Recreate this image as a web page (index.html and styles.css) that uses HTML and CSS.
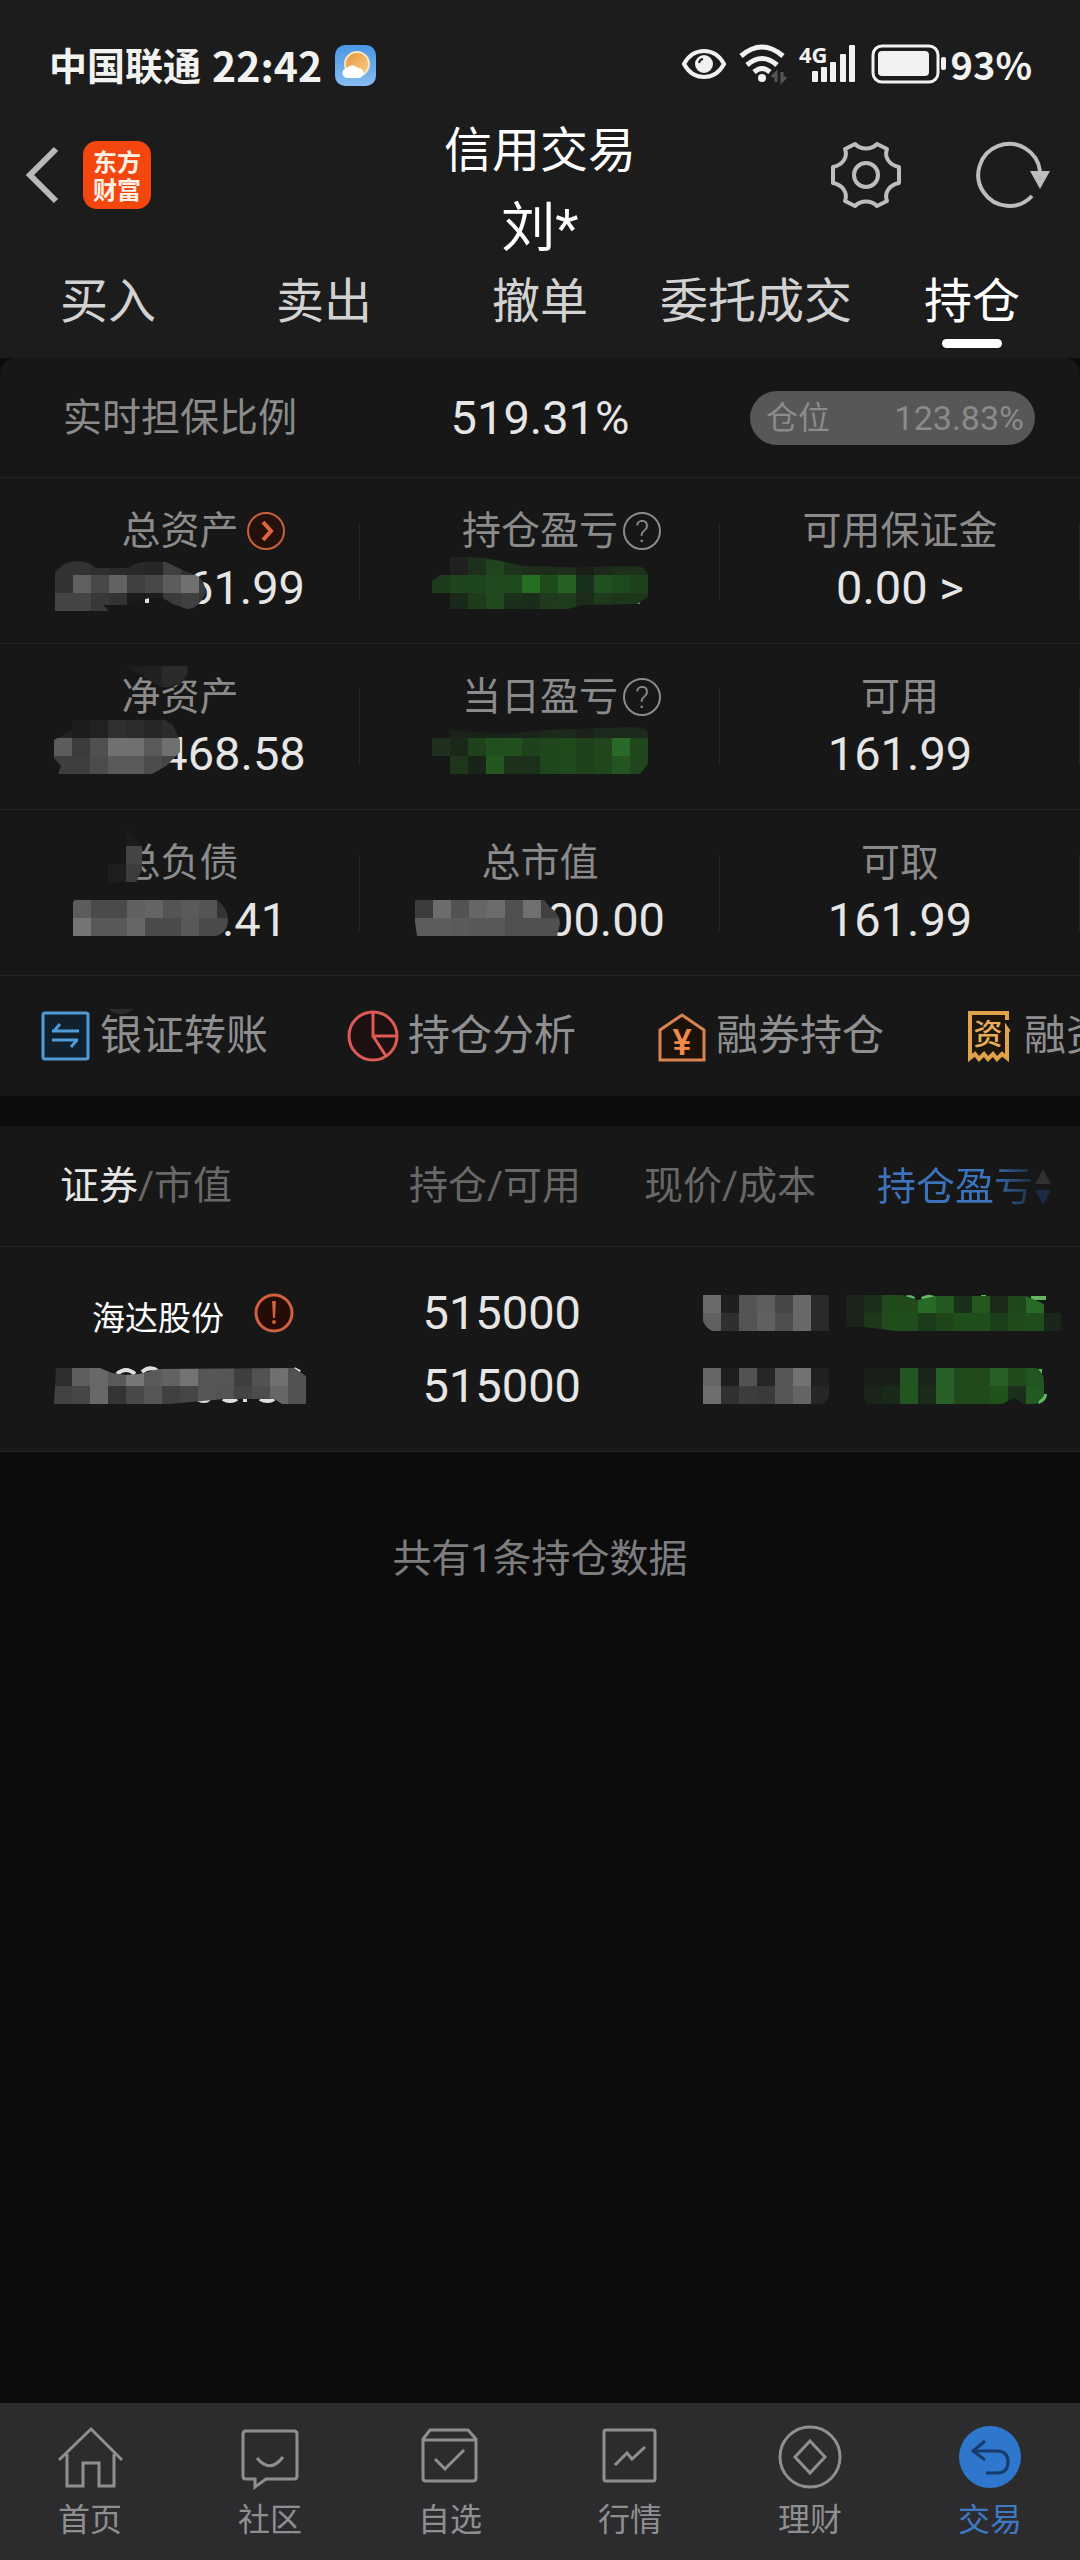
FILE: index.html
```html
<!DOCTYPE html>
<html lang="zh-CN">
<head>
	<meta charset="UTF-8">
	<meta name="viewport" content="width=device-width, initial-scale=1">
	<title>信用交易</title>
	<link rel="stylesheet" href="styles.css">
</head>
<body>
	<div class="top">
		<div class="status">
			<span class="carrier">中国联通</span>
			<span class="clock">22:42</span>
			<svg class="weather" width="41" height="41" viewBox="0 0 41 41">
				<defs>
					<linearGradient id="sky" x1="0" y1="0" x2="0" y2="1"><stop offset="0" stop-color="#4a97e6"/><stop offset="1" stop-color="#86bdf0"/></linearGradient>
					<linearGradient id="sun" x1="0" y1="0" x2="1" y2="1"><stop offset="0" stop-color="#e8943c"/><stop offset="1" stop-color="#fbd08a"/></linearGradient>
				</defs>
				<rect width="41" height="41" rx="10" fill="url(#sky)"/>
				<circle cx="22" cy="19" r="12" fill="url(#sun)" stroke="#fbe6bd" stroke-width="2"/>
				<path d="M13 33a5 5 0 0 1-1-10 7 7 0 0 1 11 0 5 5 0 0 1 1 10z" fill="#fff"/>
			</svg>
			<span class="status-right">
				<svg width="46" height="32" viewBox="0 0 46 32" fill="none">
					<path d="M3 16Q10 3 23 3T43 16Q36 29 23 29T3 16Z" stroke="#f2f2f0" stroke-width="4"/>
					<circle cx="23" cy="16" r="9" fill="#f2f2f0"/>
					<path d="M18 15a5 5 0 0 1 4-4" stroke="#1c1c1d" stroke-width="2"/>
				</svg>
				<svg width="48" height="40" viewBox="0 0 48 40" fill="none" stroke="#f2f2f0" stroke-width="5">
					<path d="M2 12Q23-6 44 12M8 21Q23 8 38 21M15 28Q23 21 31 28"/>
					<circle cx="23" cy="34" r="4" fill="#f2f2f0" stroke="none"/>
					<path d="M37 38V29l-4 4M43 28v9l4-4" stroke="#555" stroke-width="3"/>
				</svg>
				<svg class="signal" width="60" height="40" viewBox="0 0 60 40" fill="#f2f2f0">
					<text x="0" y="19">4G</text>
					<rect x="13" y="27" width="6" height="11" rx="1"/>
					<rect x="22" y="23" width="6" height="15" rx="1"/>
					<rect x="31" y="18" width="6" height="20" rx="1"/>
					<rect x="41" y="10" width="6" height="28" rx="1"/>
					<rect x="50" y="1" width="6" height="37" rx="1"/>
				</svg>
				<svg width="76" height="40" viewBox="0 0 76 40">
					<rect x="2" y="2" width="65" height="36" rx="9" fill="none" stroke="#f2f2f0" stroke-width="3"/>
					<rect x="7" y="7" width="51" height="25" rx="4" fill="#f2f2f0"/>
					<rect x="70" y="13" width="5" height="13" rx="2" fill="#f2f2f0"/>
				</svg>
				<span class="battery">93%</span>
			</span>
		</div>

		<header class="header">
			<div class="side">
				<button class="icon-btn" aria-label="返回">
					<svg width="34" height="58" viewBox="0 0 34 58" fill="none" stroke="#b8b8b8" stroke-width="6"><path d="M31 3L5 29l26 26"/></svg>
				</button>
				<a class="logo" href="#">东方<br>财富</a>
			</div>
			<h1 class="title">信用交易<span class="user">刘*</span></h1>
			<div class="side side-right">
				<button class="icon-btn" aria-label="设置">
					<svg width="72" height="72" viewBox="-36 -36 72 72" fill="none" stroke="#bdbdbd" stroke-width="4" stroke-linejoin="round">
						<path d="M11-31L21-26C18-18 23-10 33-8V8C23 10 18 18 21 26L11 31C5 25-5 25-11 31L-21 26C-18 18-23 10-33 8V-8C-23-10-18-18-21-26L-11-31C-5-25 5-25 11-31Z"/>
						<circle r="12"/>
					</svg>
				</button>
				<button class="icon-btn" aria-label="刷新">
					<svg width="76" height="72" viewBox="-36 -36 76 72" fill="none" stroke="#bdbdbd" stroke-width="4">
						<path d="M22 21A31 31 0 1 1 30-4"/>
						<path d="M20-4H40L30 14Z" fill="#bdbdbd" stroke="none"/>
					</svg>
				</button>
			</div>
		</header>

		<nav class="tabs">
			<a href="#">买入</a>
			<a href="#">卖出</a>
			<a href="#">撤单</a>
			<a href="#">委托成交</a>
			<a class="active" href="#">持仓</a>
		</nav>
	</div>

	<section class="panel account">
		<div class="ratio">
			<span class="ratio-label">实时担保比例</span>
			<span class="num">519.31%</span>
			<span class="pill"><span>仓位</span><span class="pill-num">123.83%</span></span>
		</div>
		<div class="stats">
			<div class="stat">
				<div class="label"><span>总资产</span>
					<svg class="mark" width="38" height="38" viewBox="0 0 38 38" fill="none" stroke="#c9613b"><circle cx="19" cy="19" r="18" fill="#24110b" stroke-width="2"/><path d="M16 10l8 9-8 9" stroke="#e2643d" stroke-width="4"/></svg>
				</div>
				<div class="num"><svg class="mosaic" data-name="asset" width="148" height="62"></svg>61.99</div>
			</div>
			<div class="stat">
				<div class="label"><span>持仓盈亏</span>
					<svg class="mark help" width="38" height="38" viewBox="0 0 38 38"><circle cx="19" cy="19" r="18"/><text x="19" y="30">?</text></svg>
				</div>
				<div class="num"><svg class="mosaic solo" data-name="profit" width="216" height="62"></svg></div>
			</div>
			<div class="stat">
				<div class="label"><span>可用保证金</span></div>
				<div class="num">0.00 &gt;</div>
			</div>
			<div class="stat">
				<div class="label"><span>净资产</span><svg class="smudge smudge-net" data-name="smudgeNet" width="64" height="22"></svg></div>
				<div class="num"><svg class="mosaic" data-name="net" width="123" height="68"></svg>468.58</div>
			</div>
			<div class="stat">
				<div class="label"><span>当日盈亏</span>
					<svg class="mark help" width="38" height="38" viewBox="0 0 38 38"><circle cx="19" cy="19" r="18"/><text x="19" y="30">?</text></svg>
				</div>
				<div class="num"><svg class="mosaic solo" data-name="today" width="216" height="68"></svg></div>
			</div>
			<div class="stat">
				<div class="label"><span>可用</span></div>
				<div class="num">161.99</div>
			</div>
			<div class="stat">
				<div class="label"><span>总负债</span><svg class="smudge smudge-debt" data-name="smudgeDebt" width="36" height="54"></svg></div>
				<div class="num"><svg class="mosaic" data-name="debt" width="165" height="40"></svg>.41</div>
			</div>
			<div class="stat">
				<div class="label"><span>总市值</span></div>
				<div class="num"><svg class="mosaic" data-name="market" width="148" height="40"></svg>00.00</div>
			</div>
			<div class="stat">
				<div class="label"><span>可取</span></div>
				<div class="num">161.99</div>
			</div>
		</div>
		<div class="actions">
			<a href="#">
				<svg width="50" height="54" viewBox="0 0 50 54" fill="none" stroke="#4f9bd8" stroke-width="3">
					<rect x="2" y="4" width="45" height="46" rx="2" fill="#10202d"/>
					<path d="M11 22H38M13 22l6-7M11 31H37M36 31l-6 7"/>
				</svg>银证转账
			</a>
			<a href="#">
				<svg width="50" height="54" viewBox="0 0 50 54" fill="none" stroke="#dd5a55" stroke-width="3">
					<circle cx="24" cy="27" r="24" fill="#1d1010"/>
					<path d="M24 3V27H48M24 27l13 20"/>
				</svg>持仓分析
			</a>
			<a href="#">
				<svg class="house" width="50" height="54" viewBox="0 0 50 54" fill="none" stroke="#d98450" stroke-width="3">
					<path d="M3 21L25 6l22 15V51H3Z" fill="#1d120a"/>
					<text x="25" y="46">¥</text>
				</svg>融券持仓
			</a>
			<a href="#">
				<svg class="bill" width="50" height="54" viewBox="0 0 50 54" fill="none" stroke="#e0a34c" stroke-width="4">
					<path d="M42 11V4H5V49l5-4 4 5 5-5 4 5 5-5 4 5 5-5 5 4V20l2 3" fill="#1c160c"/>
					<text x="23" y="36">资</text>
				</svg>融资负债
			</a>
			<svg class="smudge smudge-action" width="26" height="8" viewBox="0 0 26 8"><path d="M0 1H26Q13 11 0 1Z" fill="#2c2c2c"/></svg>
		</div>
	</section>

	<section class="panel">
		<table class="holdings">
			<thead>
				<tr>
					<th><b>证券</b>/市值</th>
					<th>持仓/可用</th>
					<th>现价/成本</th>
					<th>
						<button class="sort"><span>持仓盈亏</span><svg width="18" height="36" viewBox="0 0 18 36"><path d="M9 0l8 15H1Z" fill="#303030"/><path d="M9 36L1 21h16Z" fill="#1c2c40"/></svg></button>
					</th>
				</tr>
			</thead>
			<tbody>
				<tr>
					<td>
						<div class="line stock"><span>海达股份</span>
							<svg class="warn" width="40" height="40" viewBox="0 0 40 40"><circle cx="20" cy="20" r="18"/><path d="M18 8h4l-1 17h-2z"/><circle class="dot" cx="20" cy="29" r="2"/></svg>
						</div>
						<div class="line line-value"><svg class="mosaic solo" data-name="value" width="252" height="36"></svg></div>
					</td>
					<td>
						<div class="line">515000</div>
						<div class="line">515000</div>
					</td>
					<td>
						<div class="line"><svg class="mosaic solo" data-name="price" width="113" height="36"></svg></div>
						<div class="line"><svg class="mosaic solo" data-name="cost" width="113" height="36"></svg></div>
					</td>
					<td>
						<div class="line"><svg class="mosaic solo" data-name="gain" width="204" height="36"></svg></div>
						<div class="line"><svg class="mosaic solo" data-name="gainRate" width="186" height="36"></svg></div>
					</td>
				</tr>
			</tbody>
		</table>
	</section>

	<p class="total">共有1条持仓数据</p>

	<nav class="bottom">
		<a href="#">
			<svg width="66" height="66" viewBox="0 0 66 66"><path d="M2 34L34 3 65 34M10 28V60H26V37H42V60H57V28"/></svg>首页
		</a>
		<a href="#">
			<svg width="66" height="66" viewBox="0 0 66 66"><path d="M7 5H57Q60 5 60 8V50Q60 53 57 53H29L18 61V53H9Q6 53 6 50V8Q6 5 9 5M20 32Q33 48 46 31"/></svg>社区
		</a>
		<a href="#">
			<svg width="66" height="66" viewBox="0 0 66 66"><path d="M6 13L13 4H51L59 13V52Q59 55 56 55H9Q6 55 6 52ZM6 14H59M18 33L28 43 47 24"/></svg>自选
		</a>
		<a href="#">
			<svg width="66" height="66" viewBox="0 0 66 66"><rect x="7" y="4" width="51" height="51" rx="2"/><path d="M18 39L30 27 35 33 48 21"/></svg>行情
		</a>
		<a href="#">
			<svg width="66" height="66" viewBox="0 0 66 66"><circle cx="33" cy="31" r="30"/><path d="M33 15L48 31 33 47 18 31Z"/></svg>理财
		</a>
		<a class="active" href="#">
			<svg width="66" height="66" viewBox="0 0 66 66"><circle class="disc" cx="33" cy="31" r="31"/><path d="M28 15L16 25 28 34M16 25H40Q51 25 51 36T40 47H29"/></svg>交易
		</a>
	</nav>
	<script src="script.js"></script>
</body>
</html>
```

FILE: styles.css
```css
*{
	margin: 0;
	padding: 0;
	box-sizing: border-box;
}
body{
	display: flex;
	flex-direction: column;
	min-height: 100vh;
	background: #0c0c0c;
	color: #e6e6e6;
	font-family: Roboto, "Noto Sans CJK SC", sans-serif;
	line-height: 56px;
	overflow-x: hidden;
}
a{
	color: inherit;
	text-decoration: none;
}
button{
	border: 0;
	background: none;
	color: inherit;
	font: inherit;
}
svg{
	display: block;
	flex: none;
	overflow: visible;
}

/* status bar */
.top{
	background: #1c1c1d;
}
.status{
	display: flex;
	align-items: center;
	height: 110px;
	padding: 20px 48px 0 49px;
	color: #f2f2f0;
	font-family: "Noto Sans CJK SC", sans-serif;
	font-weight: 700;
}
.status > span{
	margin-top: -2px;
}
.carrier{
	font-size: 38px;
}
.clock{
	margin: 0 13px 0 11px;
	font-size: 41px;
}
.status-right{
	display: flex;
	align-items: center;
	gap: 12px;
	margin-left: auto;
}
.signal text{
	font: 700 22px "Open Sans", sans-serif;
}
.battery{
	margin-left: -8px;
	font-size: 38px;
}

/* header */
.header{
	display: grid;
	grid-template-columns: 1fr auto 1fr;
}
.side{
	display: flex;
	align-items: center;
	gap: 24px;
	height: 130px;
	padding-left: 25px;
}
.side-right{
	justify-content: flex-end;
	gap: 72px;
	padding: 0 30px 0 0;
}
.logo{
	width: 68px;
	height: 68px;
	padding: 6px 0;
	border-radius: 14px;
	background: #f4470f;
	color: #fff3e8;
	font: 700 24px/28px "Noto Sans CJK SC", sans-serif;
	text-align: center;
}
.title{
	padding-top: 2px;
	color: #fff;
	font-size: 48px;
	font-weight: 400;
	line-height: 78px;
	text-align: center;
}
.user{
	display: block;
	font-size: 54px;
}
.tabs{
	display: grid;
	grid-template-columns: repeat(5, 1fr);
	padding-bottom: 10px;
	color: #d2d2d2;
	font-size: 48px;
	line-height: 68px;
	text-align: center;
}
.tabs a::after{
	content: "";
	display: block;
	width: 60px;
	height: 9px;
	margin: 3px auto 0;
	border-radius: 5px;
}
.tabs .active{
	color: #fff;
}
.tabs .active::after{
	background: #fff;
}

/* account */
.panel{
	background: #171717;
}
.account{
	margin-bottom: 30px;
	border-radius: 16px 16px 0 0;
}
.num{
	color: #e6e6e6;
	font-size: 47px;
}
.ratio{
	display: grid;
	grid-template-columns: 1fr auto 1fr;
	align-items: center;
	height: 119px;
	padding: 0 45px 0 63px;
}
.ratio .num{
	padding-right: 18px;
}
.ratio-label{
	color: #8b8b8b;
	font-size: 39px;
}
.pill{
	display: flex;
	align-items: center;
	justify-content: space-between;
	justify-self: end;
	width: 285px;
	height: 54px;
	padding: 0 11px 0 16px;
	border-radius: 27px;
	background: #575757;
	color: #8b8b8b;
	font-size: 32px;
}
.pill-num{
	font-size: 34px;
}
.stats{
	display: grid;
	grid-template-columns: repeat(3, 1fr);
}
.stat{
	height: 166px;
	padding-top: 24px;
	border-top: 1px solid #262626;
	background: linear-gradient(#262626, #262626) no-repeat right center / 1px 76px;
}
.label{
	display: grid;
	grid-template-columns: 1fr auto 1fr;
	align-items: center;
	position: relative;
	color: #8b8b8b;
	font-size: 39px;
	height: 58px;
}
.label span{
	grid-column: 2;
}
.mark{
	margin-left: 8px;
}
.help{
	margin-left: 5px;
}
.help circle{
	fill: none;
	stroke: #8b8b8b;
	stroke-width: 2;
}
.help text{
	fill: #8b8b8b;
	font: 300 31px Roboto, sans-serif;
	text-anchor: middle;
}
.stat .num{
	display: flex;
	align-items: center;
	justify-content: center;
	height: 56px;
}
.mosaic{
	position: relative;
	margin-right: -16px;
}
.solo{
	margin-right: 0;
}
.smudge{
	position: absolute;
}
.smudge-net{
	left: 126px;
	top: -2px;
}
.smudge-debt{
	left: 108px;
	top: -6px;
}

.actions{
	display: flex;
	position: relative;
	height: 121px;
	padding-left: 41px;
	border-top: 1px solid #262626;
	overflow: hidden;
	color: #8f8f91;
	font-size: 42px;
}
.actions a{
	display: flex;
	flex: none;
	align-items: center;
	gap: 9px;
	width: 308px;
	white-space: nowrap;
}
.smudge-action{
	left: 108px;
	top: 32px;
}
.house text,
.bill text{
	stroke: none;
	text-anchor: middle;
}
.house text{
	fill: #f08a4b;
	font: 500 36px Roboto, sans-serif;
}
.bill text{
	fill: #e8b05a;
	font: 500 29px "Noto Sans CJK SC", sans-serif;
}

/* holdings */
.holdings{
	width: 100%;
	border-collapse: collapse;
	table-layout: fixed;
}
.holdings th{
	height: 120px;
	color: #686868;
	font-size: 39px;
	font-weight: 400;
	text-align: right;
}
.holdings th:first-child{
	width: 345px;
	padding-left: 60px;
	text-align: left;
}
.holdings th:nth-child(2){
	width: 236px;
}
.holdings th:last-child{
	width: 264px;
	padding-right: 28px;
}
.holdings b{
	color: #e6e6e6;
	font-weight: 400;
}
.holdings tr{
	border-bottom: 1px solid #262626;
}
.sort{
	display: inline-flex;
	align-items: center;
	gap: 1px;
	vertical-align: middle;
}
.sort span{
	background: linear-gradient(90deg, #3b74bd 72%, #1c2c40);
	-webkit-background-clip: text;
	background-clip: text;
	color: transparent;
}
.holdings td{
	padding: 30px 0 28px;
	font-size: 47px;
}
.line{
	display: flex;
	align-items: center;
	justify-content: flex-end;
	height: 73px;
}
.holdings td:last-child{
	padding-right: 30px;
}
.stock{
	justify-content: flex-start;
	gap: 30px;
	padding-left: 92px;
	color: #fff;
	font-size: 33px;
}
.stock span{
	padding-top: 12px;
}
.line-value{
	justify-content: flex-start;
	padding-left: 54px;
}
.warn circle{
	fill: #260c06;
	stroke: #d0603f;
	stroke-width: 3;
}
.warn path,
.warn .dot{
	fill: #d0603f;
	stroke: none;
}
.total{
	padding: 77px 0;
	color: #7d7d7f;
	font-size: 39px;
	line-height: 60px;
	text-align: center;
}

/* bottom bar */
.bottom{
	display: grid;
	grid-template-columns: repeat(6, 1fr);
	height: 157px;
	margin-top: auto;
	padding-top: 23px;
	background: #2c2c2e;
	color: #8f8f91;
	font-size: 32px;
}
.bottom a{
	display: flex;
	flex-direction: column;
	align-items: center;
}
.bottom svg{
	fill: none;
	stroke: #8f8f91;
	stroke-width: 3;
}
.bottom .active{
	color: #3f79c4;
}
.bottom .active svg{
	stroke: #173c6c;
}
.bottom .disc{
	fill: #2f76cd;
	stroke: none;
}
```

FILE: script.js
```js
(function(){
	var NS = "http://www.w3.org/2000/svg";
	var SIZE = 18;

	// two digits are a grey, six a colour, "-" leaves the cell empty
	var data = {
		asset: {
			rows: ["33 33 2f 2a 2a 26 40 30 30", "33 60 48 63 40 48 5c 70 3a", "44 44 38 33 1c 1c 3a 40 38"],
			clip: "M0 15Q10 4 22 4T41 11H73Q82 5 91 5H111L132 15Q149 18 151 35Q144 52 132 52L118 47 108 41H94L72 48H48L54 54H0Z",
			under: "M92 46v-5"
		},
		profit: {
			rows: ["- 202020 1d301b 22441c 1d351b 1d2c1b 1e2c1c 1e301c 1a1f18 1d2a1b 1d301b 1d301b",
				"1d3a1b 1f451f 1f451f 1f4a20 1f4a20 267026 1f4a1c 246322 18301a 205220 1e4a1e 1e421c",
				"- 1a2a18 1e3c1c 204a1e 1a301a 1a2c1a 1f3a1c 1f3c1c 1b2c1a 1e3a1c 1d361b 1d361b"],
			clip: "M0 24L8 18H18V0Q50-2 90 9L112 9Q130 11 150 10L204 9Q216 10 216 20V40L205 47 150 48 136 52H18V36H0Z",
			color: "#3da83a",
			under: "M198 45h10"
		},
		today: {
			rows: ["- 1b221a 1b221a 1b241a 1b241a 1b241a 1b2a1a 1b2a1a 1b221a 1b2a1a 1b2a1a 1b2a1a",
				"20301e 1a2818 1f421c 205020 22501f 1f421c 1f461c 1f4a1c 1f421c 1f461c 2a6a28 1f461c",
				"- 1f361c 182418 23571f 1c301a 1c301a 1f461c 1f4a1e 1f421c 1f461c 245520 1f461c"],
			clip: "M0 18H18V10L72 14 110 10 200 7Q216 7 216 14V44L208 54H18V36H0Z"
		},
		net: {
			rows: ["22 1c 22 30 2c 26 2c", "5c 3c 50 70 70 5a 70", "3e 3e 4c 5a 5a 4c 46"],
			clip: "M0 20L18 10V0L50-4H104L118 4 126 20V32L112 46 98 54H4L7 46 0 38Z"
		},
		debt: {
			rows: ["5c 4a 4a 60 64 54 5a 54 34", "74 58 58 66 4a 4a 58 4a 4a"],
			clip: "M2 0H144Q155 8 155 20T143 36H0V2Z"
		},
		market: {
			rows: ["3c 6c 52 66 6c 50 70 40 40", "5c 5c 5a 58 58 50 50 50 50"],
			clip: "M0 0H129L136 8Q145 14 145 24L142 36H2L0 22Z"
		},
		value: {
			rows: ["2e 5e 68 5a 76 5a 62 74 56 56 3e 52 70 52", "42 46 68 34 48 56 40 46 56 54 44 4c 66 52"],
			clip: "M2 0H46L58 5 72 7 85 6 105 1 240 0 252 8V36H228L220 31H170L116 36H0Z",
			under: "M63 6q9-8 18 0M88 4q8-7 16-1M143 31q8 4 12 0M169 31q7 4 14 0M191 31v3M206 31q8 4 14 0M240 1l6 3"
		},
		price: {
			rows: ["6a 1f 54 5e 46 68 2a", "60 2f 54 60 4e 68 2a"],
			clip: "M0 0H126V36H9Q2 32 0 26Z"
		},
		cost: {
			rows: ["66 1e 52 26 56 72 20", "6e 30 3c 3a 56 64 26"],
			clip: "M0 0H126V30L119 36H0Z"
		},
		gain: {
			rows: ["1a2419 1b301a 20491c 20491c 276a26 23591f 1a301a 23591f 1b2c1a 20461c 286a26 -",
				"1a2419 1c371a 1f4e1a 1f4e1c 1b3b1a 1f451b 1f4e1a 1f4e1a 1d3e1b 1f4a1c 1f4e1c 192619"],
			clip: "M0 0H56L72 5 90 1H180L198 9Q215 14 215 22V36H50L18 32H0Z",
			color: "#62b75f",
			under: "M58 4q6-4 10 0M76 4q6-4 12-1M185 3h15M135 2h5"
		},
		gainRate: {
			rows: ["1a1f18 1a2018 235523 192619 276026 20491c 20491c 276026 20491c 235520",
				"1a2418 1a2a19 235523 1a2b1a 276026 20491c 20491c 20521c 1a301a 235a22"],
			clip: "M0 0H172Q180 4 180 14V28L172 36H160L150 30 138 36H4L0 32Z",
			color: "#62b75f",
			under: "M181 26q0 6-7 8M176 1v4"
		},
		smudgeNet: {
			rows: ["1e 21 2a 2a", "1e 21 28 28"],
			clip: "M0 0H62Q62 12 54 18L46 21H34Z"
		},
		smudgeDebt: {
			rows: ["1c 1c", "1c 44", "1e 3c"],
			clip: "M18 0L34 18V42L28 54H0V36H18Z"
		}
	};

	function add(parent, tag, attrs){
		var el = document.createElementNS(NS, tag);
		for(var key in attrs){
			el.setAttribute(key, attrs[key]);
		}
		parent.appendChild(el);
		return el;
	}

	function draw(svg){
		var name = svg.getAttribute("data-name");
		var item = data[name];
		var clip = add(svg, "clipPath", {id: "clip-" + name});
		add(clip, "path", {d: item.clip});
		if(item.under){
			add(svg, "path", {d: item.under, fill: "none", stroke: item.color || "#e0e0e0", "stroke-width": 4});
		}
		var group = add(svg, "g", {"clip-path": "url(#clip-" + name + ")", "shape-rendering": "crispEdges"});
		item.rows.forEach(function(row, y){
			row.split(" ").forEach(function(cell, x){
				if(cell === "-") return;
				var fill = "#" + (cell.length === 2 ? cell + cell + cell : cell);
				add(group, "rect", {x: x * SIZE, y: y * SIZE, width: SIZE, height: SIZE, fill: fill});
			});
		});
	}

	document.querySelectorAll("svg[data-name]").forEach(draw);
})();
```
